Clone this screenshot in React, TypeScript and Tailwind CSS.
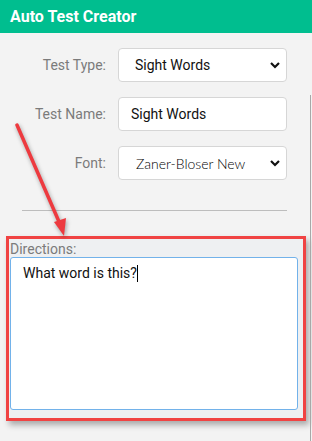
import { useState } from "react";

const fieldBox =
  "w-[169px] h-[34px] bg-white border border-[#d6d6d6] rounded-[4px] text-[14px] text-[#111]";

function Chevron() {
  return (
    <svg
      className="absolute right-[6px] top-1/2 -translate-y-1/2 pointer-events-none"
      width="12"
      height="8"
      viewBox="0 0 12 8"
    >
      <path d="M2 2 L6 6 L10 2" fill="none" stroke="#111" strokeWidth="2.2" />
    </svg>
  );
}

export default function App() {
  const [testType, setTestType] = useState("Sight Words");
  const [testName, setTestName] = useState("Sight Words");
  const [font, setFont] = useState("Zaner-Bloser New");

  return (
    <div className="relative w-[312px] h-[441px] overflow-hidden bg-[#f3f3f3] font-['Roboto',sans-serif]">
      <header className="h-[33px] bg-[#00be8f] pl-[10px] flex items-center">
        <h1 className="text-white font-bold text-[16px]">Auto Test Creator</h1>
      </header>

      <div className="pt-[15px] flex flex-col gap-[15px]">
        <div className="flex items-center gap-[12px]">
          <label className="w-[106px] text-right text-[14px] text-[#7b7b7b]">Test Type:</label>
          <div className="relative">
            <select
              value={testType}
              onChange={(e) => setTestType(e.target.value)}
              className={`${fieldBox} appearance-none pl-[16px] outline-none`}
            >
              <option>Sight Words</option>
              <option>Spelling</option>
            </select>
            <Chevron />
          </div>
        </div>

        <div className="flex items-center gap-[12px]">
          <label className="w-[106px] text-right text-[14px] text-[#7b7b7b]">Test Name:</label>
          <input
            value={testName}
            onChange={(e) => setTestName(e.target.value)}
            className={`${fieldBox} pl-[12px] outline-none`}
          />
        </div>

        <div className="flex items-center gap-[12px]">
          <label className="w-[106px] text-right text-[14px] text-[#7b7b7b]">Font:</label>
          <div className="relative">
            <select
              value={font}
              onChange={(e) => setFont(e.target.value)}
              className={`${fieldBox} appearance-none pl-[17px] outline-none font-['Lato',sans-serif] font-light !text-black`}
            >
              <option>Zaner-Bloser New</option>
              <option>Arial</option>
            </select>
            <Chevron />
          </div>
        </div>
      </div>

      <hr className="mt-[30px] ml-[22px] w-[265px] border-0 border-t border-[#bdbdbd]" />

      <section className="mt-[25px] ml-[6px] w-[300px] h-[185px] border-[3px] border-[#f04343] bg-[#eef0f2] shadow-[3px_4px_6px_rgba(0,0,0,0.3)] pl-[1px] pr-[5px] pt-[1px]">
        <div className="text-[14px] leading-[18px] text-[#7b7b7b]">Directions:</div>
        <div className="mt-[-1px] h-[153px] bg-white border border-[#72b2ea] rounded-[3px] pl-[12px] pt-[5px] text-[14px] text-[#111]">
          What word is this?
          <span className="inline-block w-px h-[17px] bg-black align-[-4px]" />
        </div>
      </section>

      <div className="absolute right-[1px] top-[95px] bottom-0 w-px bg-[#a8a8a8]" />

      <svg
        className="absolute left-0 top-0 pointer-events-none"
        width="312"
        height="441"
        style={{ filter: "drop-shadow(1px 2px 2px rgba(0,0,0,0.35))" }}
      >
        <line x1="17" y1="125" x2="60" y2="224" stroke="#ed3a3f" strokeWidth="3.5" strokeLinecap="round" />
        <polygon points="64,236 54,222 66,218" fill="#ed3a3f" />
      </svg>
    </div>
  );
}
